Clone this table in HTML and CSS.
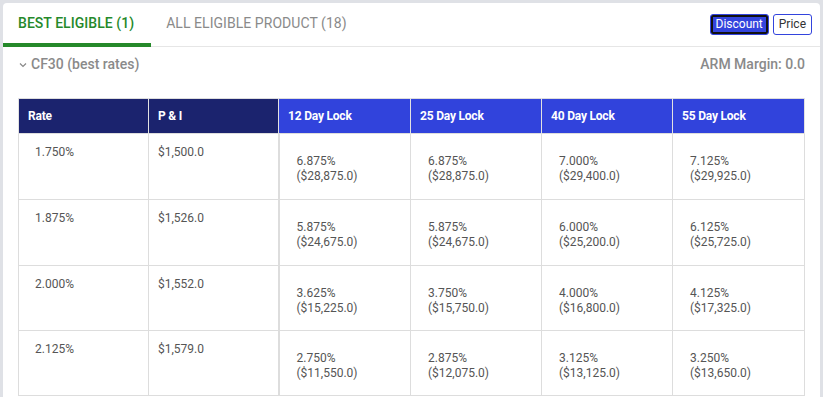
FILE: index.html
```html
<!DOCTYPE html>
<html>
<head>
<meta charset="utf-8">
<link rel="stylesheet" href="styles.css">
</head>
<body>
<div class="panel">
  <div class="tabbar">
    <div class="tab active">BEST ELIGIBLE (1)</div>
    <div class="tab">ALL ELIGIBLE PRODUCT (18)</div>
    <div class="toggles">
      <button class="btn btn-on">Discount</button>
      <button class="btn">Price</button>
    </div>
  </div>
  <div class="subbar">
    <div class="product"><svg class="chev" width="8" height="6" viewBox="0 0 8 6"><polyline points="1,1.5 4,4.5 7,1.5" fill="none" stroke="#888" stroke-width="1.2"/></svg>CF30 (best rates)</div>
    <div class="arm">ARM Margin: 0.0</div>
  </div>
  <table class="rates">
    <colgroup>
      <col style="width:130px"><col style="width:130px"><col style="width:132px"><col style="width:131px"><col style="width:131px"><col style="width:132px">
    </colgroup>
    <thead>
      <tr>
        <th class="dark">Rate</th>
        <th class="dark">P &amp; I</th>
        <th class="lock first">12 Day Lock</th>
        <th class="lock">25 Day Lock</th>
        <th class="lock">40 Day Lock</th>
        <th class="lock">55 Day Lock</th>
      </tr>
    </thead>
    <tbody>
      <tr class="r66">
        <td class="rate">1.750%</td><td class="pi">$1,500.0</td>
        <td class="lk first">6.875%<br>($28,875.0)</td><td class="lk">6.875%<br>($28,875.0)</td><td class="lk">7.000%<br>($29,400.0)</td><td class="lk">7.125%<br>($29,925.0)</td>
      </tr>
      <tr class="r66">
        <td class="rate">1.875%</td><td class="pi">$1,526.0</td>
        <td class="lk first">5.875%<br>($24,675.0)</td><td class="lk">5.875%<br>($24,675.0)</td><td class="lk">6.000%<br>($25,200.0)</td><td class="lk">6.125%<br>($25,725.0)</td>
      </tr>
      <tr class="r65">
        <td class="rate">2.000%</td><td class="pi">$1,552.0</td>
        <td class="lk first">3.625%<br>($15,225.0)</td><td class="lk">3.750%<br>($15,750.0)</td><td class="lk">4.000%<br>($16,800.0)</td><td class="lk">4.125%<br>($17,325.0)</td>
      </tr>
      <tr class="r65">
        <td class="rate">2.125%</td><td class="pi">$1,579.0</td>
        <td class="lk first">2.750%<br>($11,550.0)</td><td class="lk">2.875%<br>($12,075.0)</td><td class="lk">3.125%<br>($13,125.0)</td><td class="lk">3.250%<br>($13,650.0)</td>
      </tr>
    </tbody>
  </table>
</div>
</body>
</html>
```
FILE: styles.css
```css
html, body {
  margin: 0;
  padding: 0;
}
body {
  background: #dfe1e6;
  font-family: Roboto, "Liberation Sans", Arial, sans-serif;
  overflow: hidden;
  height: 397px;
}
.panel {
  margin: 3px 3px 0 3px;
  background: #fff;
  border-radius: 4px 4px 0 0;
  height: 394px;
}
.tabbar {
  display: flex;
  align-items: stretch;
  height: 43px;
  border-bottom: 1px solid #e6e6e6;
  position: relative;
}
.tab {
  padding: 0 17px 0 15px;
  font-size: 14px;
  color: #8a8a8a;
  display: flex;
  align-items: center;
  height: 40px;
  border-bottom: 4px solid transparent;
  letter-spacing: 0.05px;
}
.tab.active {
  color: #25892a;
  font-weight: 500;
  border-bottom-color: #25892a;
}
.toggles {
  margin-left: auto;
  display: flex;
  gap: 4px;
  align-items: flex-start;
  padding: 11px 8px 0 0;
}
.btn {
  font-family: Roboto, "Liberation Sans", Arial, sans-serif;
  font-size: 12px;
  height: 21px;
  padding: 0 5px;
  border: 1px solid #3344dd;
  border-radius: 3px;
  background: #fff;
  color: #333;
  line-height: 19px;
}
.btn-on {
  background: #3344dd;
  color: #fff;
  box-shadow: inset 0 0 0 2px #111;
  padding: 0 5px;
}
.subbar {
  display: flex;
  justify-content: space-between;
  align-items: center;
  height: 34px;
  padding: 0 15px 0 15px;
  font-size: 14px;
  font-weight: 500;
  color: #8a8a8a;
}
.product {
  display: flex;
  align-items: center;
}
.chev {
  margin: 1px 4px 0 1px;
}
.rates {
  margin: 17px 0 0 15px;
  width: 786px;
  table-layout: fixed;
  border-collapse: collapse;
  border-top: 1px solid #ddd;
}
.rates th {
  height: 35px;
  padding: 0 0 0 9px;
  text-align: left;
  font-size: 12px;
  font-weight: 700;
  color: #fff;
  border-left: 1px solid #e2e2e2;
  border-right: 1px solid #e2e2e2;
  box-sizing: border-box;
  letter-spacing: -0.2px;
}
.rates th.dark {
  background: #1b236e;
}
.rates th.lock {
  background: #3143dc;
}
.rates td {
  vertical-align: top;
  font-size: 12px;
  line-height: 15px;
  color: #555;
  border: 1px solid #dddddd;
  padding: 11px 0 0 9px;
}
.rates td.rate {
  padding-left: 16px;
}
.rates td.lk {
  padding: 20px 0 0 17px;
}
.rates td.first {
  border-left: 2px solid #dddddd;
}
.r66 td {
  height: 66px;
  box-sizing: border-box;
}
.r65 td {
  height: 65px;
  box-sizing: border-box;
}
```
